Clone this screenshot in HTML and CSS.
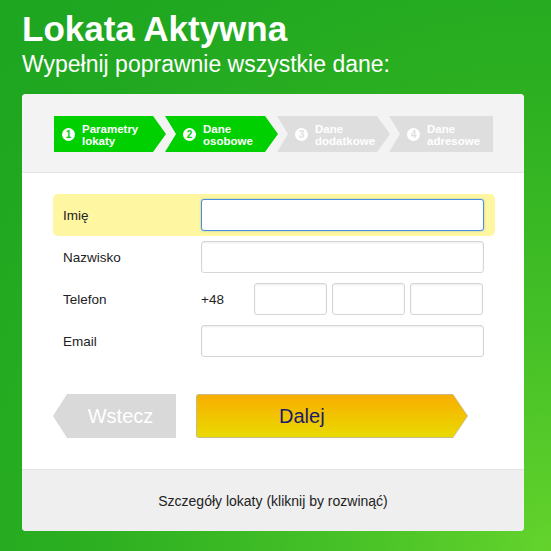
FILE: index.html
```html
<!DOCTYPE html>
<html lang="pl">
<head>
<meta charset="utf-8">
<title>Lokata Aktywna</title>
<link rel="stylesheet" href="styles.css">
</head>
<body>
<div class="page">
  <h1 class="title">Lokata Aktywna</h1>
  <p class="subtitle">Wypełnij poprawnie wszystkie dane:</p>
  <div class="card">
    <div class="card-head">
      <ol class="steps">
        <li class="step step-first step-active"><span class="num">1</span><span class="step-label">Parametry<br>lokaty</span></li>
        <li class="step step-mid step-active"><span class="num">2</span><span class="step-label">Dane<br>osobowe</span></li>
        <li class="step step-mid"><span class="num">3</span><span class="step-label">Dane<br>dodatkowe</span></li>
        <li class="step step-last"><span class="num">4</span><span class="step-label">Dane<br>adresowe</span></li>
      </ol>
    </div>
    <div class="card-body">
      <div class="row row-focus">
        <label class="lbl">Imię</label>
        <input class="field field-focus" type="text">
      </div>
      <div class="row">
        <label class="lbl">Nazwisko</label>
        <input class="field" type="text">
      </div>
      <div class="row">
        <label class="lbl">Telefon</label>
        <span class="prefix">+48</span>
        <div class="phone">
          <input class="field" type="text">
          <input class="field" type="text">
          <input class="field" type="text">
        </div>
      </div>
      <div class="row">
        <label class="lbl">Email</label>
        <input class="field" type="text">
      </div>
      <div class="actions">
        <button class="btn-back" type="button">Wstecz</button>
        <button class="btn-next" type="button"><span class="btn-next-in">Dalej</span></button>
      </div>
    </div>
    <div class="card-foot">Szczegóły lokaty (kliknij by rozwinąć)</div>
  </div>
</div>
</body>
</html>
```
FILE: styles.css
```css
* { box-sizing: border-box; }
html, body { margin: 0; padding: 0; }
body {
  width: 551px;
  height: 551px;
  overflow: hidden;
  font-family: "Liberation Sans", Arial, sans-serif;
  background: radial-gradient(circle at 100% 100%, #64d32c 0px, #45c027 220px, #2db021 450px, #20a821 650px, #1ea520 800px);
}
.page { padding: 9px 0 0 22px; }
.title {
  margin: 0;
  font-size: 35px;
  line-height: 40px;
  font-weight: bold;
  color: #fff;
}
.subtitle {
  margin: 2px 0 0;
  font-size: 23px;
  line-height: 26px;
  color: #fff;
}
.card {
  margin-top: 17px;
  width: 502px;
  background: #fff;
  border-radius: 4px;
  overflow: hidden;
}
.card-head {
  background: #f3f3f3;
  border-bottom: 1px solid #e4e4e4;
  height: 79px;
  padding: 22px 0 0 32px;
}
.steps {
  list-style: none;
  margin: 0;
  padding: 0;
  display: flex;
}
.step {
  height: 36px;
  width: 113px;
  margin-left: -1px;
  background: #dedede;
  color: #fff;
  display: flex;
  align-items: center;
  padding-left: 18px;
  font-size: 11.5px;
  line-height: 12px;
  font-weight: bold;
  clip-path: polygon(0 0, calc(100% - 13px) 0, 100% 50%, calc(100% - 13px) 100%, 0 100%, 11px 50%);
}
.step-first {
  margin-left: 0;
  width: 112px;
  padding-left: 8px;
  clip-path: polygon(0 0, calc(100% - 13px) 0, 100% 50%, calc(100% - 13px) 100%, 0 100%);
}
.step-last {
  width: 104px;
  clip-path: polygon(0 0, 100% 0, 100% 100%, 0 100%, 11px 50%);
}
.step-active { background: #00d000; }
.step-label { padding-top: 1px; }
.num {
  width: 13px;
  height: 13px;
  border-radius: 50%;
  background: #fff;
  color: #dedede;
  font-size: 10px;
  line-height: 13px;
  text-align: center;
  flex: none;
  margin-right: 7px;
}
.step-active .num { color: #00d000; }
.card-body {
  padding: 21px 29px 31px 31px;
}
.row {
  height: 42px;
  display: flex;
  align-items: center;
  padding: 0 11px 0 10px;
  border-radius: 5px;
}
.row-focus { background: #fff6a2; }
.lbl {
  width: 138px;
  flex: none;
  font-size: 13.5px;
  color: #222;
}
.field {
  flex: 1;
  height: 32px;
  border: 1px solid #d6d6d6;
  border-radius: 3px;
  background: #fff;
  box-shadow: inset 0 1px 2px rgba(0,0,0,0.08);
  margin: 0;
  padding: 0 6px;
  font: 13px "Liberation Sans", Arial, sans-serif;
}
.field-focus {
  border-color: #4a8ede;
  box-shadow: 0 0 2px rgba(74,142,222,0.6);
  outline: none;
}
.prefix {
  width: 53px;
  flex: none;
  font-size: 13.5px;
  color: #222;
}
.phone {
  flex: 1;
  display: flex;
  gap: 5px;
}
.phone .field { width: 73px; flex: none; }
.actions {
  margin-top: 32px;
  display: flex;
  gap: 20px;
  height: 44px;
}
.btn-back {
  width: 123px;
  height: 44px;
  border: 0;
  padding: 0 0 0 12px;
  background: #d9d9d9;
  color: #fff;
  font: 20px "Liberation Sans", Arial, sans-serif;
  clip-path: polygon(14px 0, 100% 0, 100% 100%, 14px 100%, 0 50%);
}
.btn-next {
  width: 272px;
  height: 44px;
  border: 0;
  padding: 1px;
  background: #c7bb88;
  border-radius: 3px 0 0 3px;
  clip-path: polygon(0 0, calc(100% - 15px) 0, 100% 50%, calc(100% - 15px) 100%, 0 100%);
  font: 20px "Liberation Sans", Arial, sans-serif;
}
.btn-next-in {
  display: flex;
  align-items: center;
  height: 42px;
  padding-left: 82px;
  border-radius: 2px 0 0 2px;
  background: linear-gradient(#f9ae00, #e9da00);
  color: #1b1b6e;
  clip-path: polygon(0 0, calc(100% - 14px) 0, 100% 50%, calc(100% - 14px) 100%, 0 100%);
}
.card-foot {
  background: #efefef;
  border-top: 1px solid #e3e3e3;
  height: 62px;
  display: flex;
  align-items: center;
  justify-content: center;
  font-size: 14px;
  color: #222;
}
```
